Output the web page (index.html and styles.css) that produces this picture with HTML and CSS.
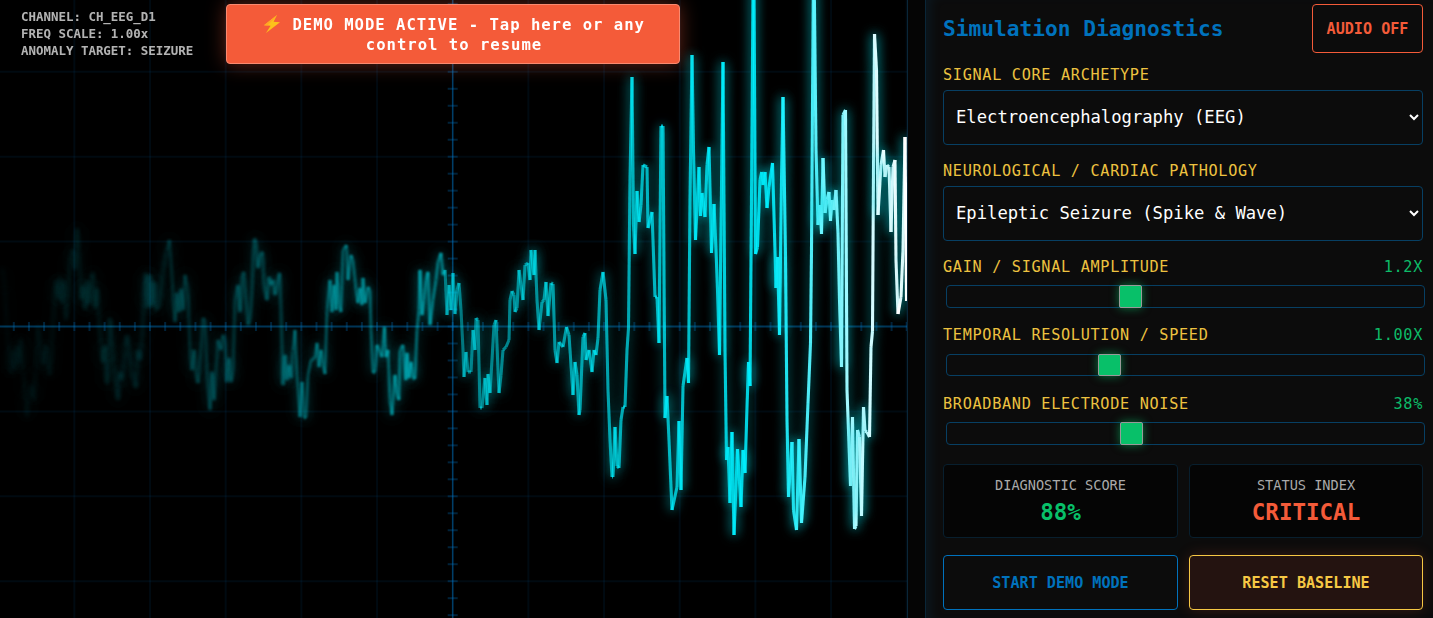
FILE: index.html
```
<!DOCTYPE html>
<html lang="en">
<head>
	<meta charset="UTF-8">
	<meta name="viewport" content="width=device-width, initial-scale=1.0">
	<title>Simulation Diagnostics</title>
	<link rel="stylesheet" href="styles.css">
</head>
<body>
	<main class="app">
		<section class="scope">
			<canvas id="scope" width="907" height="618"></canvas>
			<div class="hud">
				<div>CHANNEL: CH_EEG_D1</div>
				<div>FREQ SCALE: 1.00x</div>
				<div>ANOMALY TARGET: SEIZURE</div>
			</div>
			<div class="banner"><svg class="bolt" viewBox="0 0 18 20"><path d="M14 1 1 11.3l6.6.5L3 19 17 8.3l-6.4-.6z" fill="#fcc21b"/><path d="M14 1 1 11.3l3.4.2L11 5z" fill="#ffa726"/></svg> DEMO MODE ACTIVE - Tap here or any control to resume</div>
		</section>

		<aside class="panel">
			<header class="panel-head">
				<h1>Simulation Diagnostics</h1>
				<button class="btn btn-audio">AUDIO OFF</button>
			</header>

			<div class="field">
				<label for="signal">Signal Core Archetype</label>
				<select id="signal"><option>Electroencephalography (EEG)</option></select>
			</div>
			<div class="field">
				<label for="pathology">Neurological / Cardiac Pathology</label>
				<select id="pathology"><option>Epileptic Seizure (Spike &amp; Wave)</option></select>
			</div>

			<div class="slider">
				<label for="gain">Gain / Signal Amplitude <span>1.2x</span></label>
				<input type="range" id="gain" min="0.1" max="3" step="0.1" value="1.2">
			</div>
			<div class="slider">
				<label for="speed">Temporal Resolution / Speed <span>1.00x</span></label>
				<input type="range" id="speed" min="0.25" max="2.5" step="0.05" value="1">
			</div>
			<div class="slider">
				<label for="noise">Broadband Electrode Noise <span>38%</span></label>
				<input type="range" id="noise" min="0" max="100" value="38">
			</div>

			<div class="stats">
				<div class="stat">
					<div class="stat-name">DIAGNOSTIC SCORE</div>
					<div class="stat-value good">88%</div>
				</div>
				<div class="stat">
					<div class="stat-name">STATUS INDEX</div>
					<div class="stat-value bad">CRITICAL</div>
				</div>
			</div>

			<div class="actions">
				<button class="btn btn-demo">START DEMO MODE</button>
				<button class="btn btn-reset">RESET BASELINE</button>
			</div>
		</aside>
	</main>
	<script src="scope.js"></script>
</body>
</html>
```
FILE: scope.js
```
const canvas = document.getElementById("scope");
const ctx = canvas.getContext("2d");
const W = canvas.width;
const H = canvas.height;
const MID_X = 452.7;
const MID_Y = 326.5;
const STEP_X = 75.67;
const STEP_Y = 84.9;

// x,y pairs of the trace, oldest sample first
const trace = `
0,270 3,270 5,290 7,330 9,365 11,374 13,350 15,370 17,345 19,365 21,338 23,370 25,395 27,417 29,398
31,385 34,400 36,370 38,325 41,350 43,365 46,345 48,370 50,375 52,345 54,300 56,280 58,300 60,278
62,303 64,280 66,320 68,300 70,255 73,250 75,270 77,228 79,250 81,300 83,285 85,310 87,280 89,305
91,282 93,272 95,308 97,288 99,320 101,345 103,363 105,345 107,384 109,355 110,318 113,350 114,365
116,385 118,400 120,372 122,380 125,350 127,335 129,348 131,370 134,380 136,388 138,350 140,360
142,340 144,300 146,273 148,308 150,275 152,306 154,282 156,310 158,308 160,300 163,270 167,250
169.5,240 171,260 173,295 175,322 177,293 179,312 181,289 183,310 185,275 188,290 190,350 192,370
194,350 196,375 198,383 201,350 203,318 205,320 207,372 210,410 212,372 214,400 216,370 218,340
221,350 223,335 225,340 227,382 229,358 231,382 233,370 235,300 238,285 240,312 242,275 244,272
246,300 248,325 250,320 252,290 254,239 256,240 258,268 260,255 262.5,252 264,285 267,300 269,277
271,285 273,280 275,295 277,285 279.5,273 281,310 283,385 285,355 287,380 289,365 291,378 293,350
295,330 297,375 300,417 302,382 304,418 306,418 308,375 311,360 315,358 317,343 319,367 321,350
323,365 325,374 327,310 330,280 332,312 334,285 336,310 337,272 339,305 341,312 343,250 346.5,245
348,280 351,255 353,260 356,290 358,303 360,288 362,305 363,278 365,303 368,287 370,290 371,330
373,373 375,372 377,345 380,352 382,357 384.5,327 386,357 388,350 390,400 392,415 395,375 397,395
399,400 400,350 403,345 406,380 407,353 409,378 411,362 413,378 415,379 417,330 419,310 420,270
422,315 424,300 426,280 428,272 430,325 433,300 436,280 438,262 441,253 443,275 445,270 447,315
449,285 451,310 453,273 455,314 457,290 459,283 461,310 463,350 464,377 466,352 468,372 471,372
473,330 475,350 476,318 478,320 480,408 482,408 485,378 487,405 488,374 490,393 492,360 494,325
496,320 498,370 499,393 501,375 503,350 506,347 509,340 510,300 512,291 514,295 515,312 517,308
519,270 521,285 523,300 525,265 528,263 530,280 531,250 534,275 535,250 537,300 539,330 542,302
544,300 546,282 548,316 551,283 553,284 555,350 557,363 559,342 563,347 566.5,327 569,335 571,365
573,395 575,362 577,375 579,415 580,410 583,337 585,333 586,360 589,350 592,372 594,350 596,355
598,338 600,290 603,272 606,300 608,390 610,440 612,477 613,477 615,427 617,466 619,468 621,420
623,407 625,407 627,350 628.5,328 630,180 632,77 633.5,225 635,254 637,191 639,222 641,205 643,165
647,167 648,228 652,212 655,297 657,297 659,343 661,126 663,126 665,418 667,396 669,440 672,510
677,487 679,421 681,490 683,386 687,358 688.5,383 690,200 692,55 693.5,150 695.5,240 699,167
700.5,216 702,193 705,217 707,165 709,147 711.5,253 714,204 716,250 717.5,290 719.5,355 723,62
725,350 726.5,460 728,447 730,503 732,432 734,535 737.5,449 741,507 743,450 745,473 747,407 748.5,362
750,386 751.5,200 753,-10 754,-10 755.5,254 757.5,247 760,180 761.7,172 763,185 765,172 767,208
769,187 772.5,163 774.5,233 776,288 777.5,257 779.5,335 781.5,180 783,97 785.5,257 787,420 788.5,497
792,442 793.5,510 796.5,530 799,439 801.5,523 805,477 808,403 810.5,343 811.5,250 813.3,-10
814.3,-10 816,150 818,225 820,205 821.5,234 823,158 825,213 827,200 829,192 830.5,221 832,200
834,210 836,190 838,233 839.5,300 841.5,367 843,115 845.5,110 847,390 850.5,486 852.5,417 854.5,529
856,526 857.5,430 859.5,437 861.5,516 863.5,407 865,431 867,432 869.5,437 871,347 872.5,331 873.3,200
874.5,34 876.5,70 878,215 881,165 883.5,150 885,177 887,165 889,167 891,232 893,167 895,160 896,260
898,314 901,297 903,250 905,137 906.5,301`.trim().split(/\s+/).map(p => p.split(",").map(Number));

function line(x1, y1, x2, y2) {
	ctx.beginPath();
	ctx.moveTo(x1, y1);
	ctx.lineTo(x2, y2);
	ctx.stroke();
}

function drawGrid() {
	ctx.lineWidth = 2;
	ctx.strokeStyle = "rgba(0, 114, 189, 0.09)";
	for (let i = -6; i <= 6; i++) {
		line(MID_X + i * STEP_X, 0, MID_X + i * STEP_X, H);
	}
	for (let i = -3; i <= 3; i++) {
		line(0, MID_Y + i * STEP_Y, W, MID_Y + i * STEP_Y);
	}

	// centre axes with ticks
	ctx.strokeStyle = "rgba(0, 114, 189, 0.4)";
	line(0, MID_Y, W, MID_Y);
	ctx.lineWidth = 1.5;
	ctx.strokeStyle = "rgba(0, 114, 189, 0.5)";
	line(MID_X, 0, MID_X, H);
	ctx.lineWidth = 2;
	ctx.strokeStyle = "rgba(0, 114, 189, 0.3)";
	for (let i = -30; i <= 30; i++) {
		const x = MID_X + i * STEP_X / 5;
		line(x, MID_Y - 4.5, x, MID_Y + 4.5);
	}
	for (let i = -20; i <= 20; i++) {
		const y = MID_Y + i * STEP_Y / 5;
		line(MID_X - 5, y, MID_X + 5, y);
	}
}

function drawTrace() {
	for (let i = 1; i < trace.length; i++) {
		const [x1, y1] = trace[i - 1];
		const [x2, y2] = trace[i];
		const age = x2 / W;
		const white = Math.max(0, (age - 0.85) / 0.15);
		const r = Math.round(255 * Math.min(1, white * 1.1));
		ctx.lineWidth = 3.1;
		ctx.globalAlpha = Math.min(1, 0.05 + Math.pow(age, 1.5) * 1.08);
		ctx.strokeStyle = `rgb(${r}, ${Math.round(240 + 15 * white)}, 255)`;
		ctx.shadowColor = "rgba(0, 215, 225, 0.8)";
		ctx.shadowBlur = 12;
		ctx.filter = age < 0.7 ? `blur(${((0.7 - age) * 3.6).toFixed(1)}px)` : "none";
		line(x1, y1, x2, y2);
	}
}

drawGrid();
drawTrace();
```
FILE: styles.css
```
* {
	box-sizing: border-box;
}

body {
	margin: 0;
	height: 100vh;
	overflow: hidden;
	background-color: #050505;
	color: #fff;
	font-family: "DejaVu Sans Mono", monospace;
}

.app {
	display: flex;
	gap: 17px;
	height: 100vh;
}

.scope {
	position: relative;
	width: 908px;
	flex: none;
	background-color: #000;
	border-right: 1px solid #0a2638;
}

.scope canvas {
	display: block;
}

.hud {
	position: absolute;
	top: 8px;
	left: 21px;
	font-size: 12.45px;
	font-weight: bold;
	line-height: 17px;
	color: #fff;
	opacity: 0.7;
}

.banner {
	position: absolute;
	top: 4px;
	left: 226px;
	width: 454px;
	height: 60px;
	padding: 10px 23px 10px 25px;
	background-color: #f45b39;
	border: 1px solid #f98a70;
	border-radius: 4px;
	box-shadow: 0 0 20px rgba(244, 91, 57, 0.4);
	font-size: 15.6px;
	font-weight: bold;
	letter-spacing: 0.98px;
	line-height: 20px;
	text-align: center;
}

.bolt {
	width: 18px;
	height: 20px;
	margin: -3px 1px -4px 0;
}

.panel {
	flex: 1;
	padding: 4px 10px 8px 17px;
	background-color: #0c0c0c;
	border-left: 1px solid #0a2638;
	box-shadow: inset 10px 0 12px -6px rgba(0, 114, 189, 0.12);
}

.panel-head {
	display: flex;
	justify-content: space-between;
	align-items: center;
	width: 480px;
	height: 49px;
}

h1 {
	margin: 0;
	font-size: 21.2px;
	color: #0072bd;
}

.btn {
	height: 55px;
	padding: 0;
	background-color: #0c0c0c;
	border: 1px solid;
	border-radius: 4px;
	font-family: inherit;
	font-size: 15.12px;
	font-weight: bold;
}

.btn-audio {
	width: 111px;
	height: 49px;
	color: #f45b39;
}

.field label,
.slider label {
	display: flex;
	justify-content: space-between;
	width: 480px;
	font-size: 15.2px;
	letter-spacing: 0.69px;
	line-height: 18px;
	text-transform: uppercase;
	color: #edc240;
}

.field {
	height: 96px;
	padding-top: 13px;
}

select {
	display: block;
	width: 480px;
	height: 55px;
	margin-top: 6px;
	padding: 0 8px 2px;
	background-color: #0c0c0c;
	border: 1px solid #073f63;
	border-radius: 4px;
	color: #fff;
	font-family: inherit;
	font-size: 17.2px;
}

.slider {
	height: 68.5px;
	padding-top: 12.8px;
}

.slider span {
	color: #0dbb68;
}

.slider input {
	-webkit-appearance: none;
	appearance: none;
	display: block;
	width: 479px;
	height: 22.5px;
	margin: 9.3px 0 0 3px;
	background-color: #0c0c0c;
	border: 1px solid #073f63;
	border-radius: 4px;
}

.slider input::-webkit-slider-thumb {
	-webkit-appearance: none;
	width: 23px;
	height: 22.5px;
	background-color: #08c069;
	border: 1px solid #999;
	border-radius: 2px;
	box-shadow: 0 0 10px rgba(8, 192, 105, 0.6);
}

.stats,
.actions {
	display: grid;
	grid-template-columns: 235px 234px;
	gap: 11px;
}

.stats {
	margin-top: 13.5px;
}

.stat {
	height: 74px;
	padding-top: 12px;
	background-color: #050505;
	border: 1px solid #081f2e;
	border-radius: 4px;
	text-align: center;
}

.stat-name {
	font-size: 13.6px;
	line-height: 17px;
	color: #aaa;
}

.stat-value {
	margin-top: 5px;
	font-size: 22.5px;
	font-weight: bold;
	line-height: 26px;
}

.good {
	color: #08c069;
}

.bad {
	color: #f45b39;
}

.actions {
	margin-top: 17px;
}

.btn-demo {
	color: #0072bd;
}

.btn-reset {
	background-color: #241310;
	color: #f6c844;
	box-shadow: 0 0 15px rgba(244, 91, 57, 0.18);
}
```
